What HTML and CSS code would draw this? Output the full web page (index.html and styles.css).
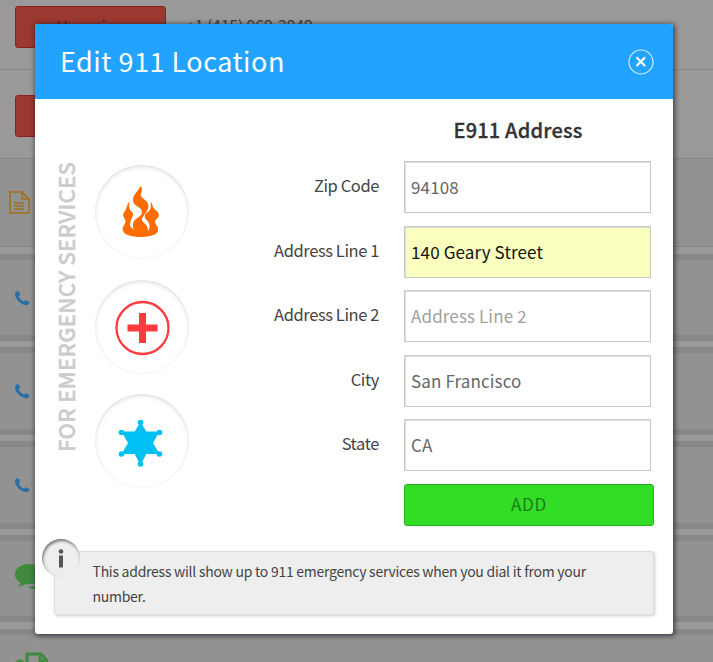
FILE: index.html
```html
<!DOCTYPE html>
<html lang="en">
<head>
<meta charset="utf-8">
<title>Edit 911 Location</title>
<link rel="stylesheet" href="styles.css">
</head>
<body>
<div class="page">
  <div class="number-row first"><span class="danger">Unassign</span><span class="phone">+1 (415) 969-2949</span></div>
  <div class="number-row"><span class="danger"></span></div>
  <div class="note-row">
    <svg class="doc" viewBox="0 0 21 24" width="21" height="24"><path d="M1 1h12l7 7v14H1zM13 1v7h7M5 12h10M5 15h10M5 18h10" fill="none" stroke="#a1701f" stroke-width="1.6"/></svg>
  </div>
  <div class="card"><svg class="call" viewBox="0 0 15 15" width="15" height="15"><path d="M1.200 0.500L4.200 0.400L5 4.200L3.700 5.400C4.700 7.700 6.500 9.600 9.100 10.600L10.600 9.200L14.500 10.900C14.300 12.600 13.400 14.200 11.500 14.200C6 14.200 0.300 8.600 0.100 3.600C0.050 2.200 0.500 1 1.200 0.500Z"/></svg></div>
  <div class="card tall"><svg class="call" viewBox="0 0 15 15" width="15" height="15"><path d="M1.200 0.500L4.200 0.400L5 4.200L3.700 5.400C4.700 7.700 6.500 9.600 9.100 10.600L10.600 9.200L14.500 10.900C14.300 12.600 13.400 14.200 11.500 14.200C6 14.200 0.300 8.600 0.100 3.600C0.050 2.200 0.500 1 1.200 0.500Z"/></svg></div>
  <div class="card tall"><svg class="call" viewBox="0 0 15 15" width="15" height="15"><path d="M1.200 0.500L4.200 0.400L5 4.200L3.700 5.400C4.700 7.700 6.500 9.600 9.100 10.600L10.600 9.200L14.500 10.900C14.300 12.600 13.400 14.200 11.500 14.200C6 14.200 0.300 8.600 0.100 3.600C0.050 2.200 0.500 1 1.200 0.500Z"/></svg></div>
  <div class="card chat-card"><svg viewBox="0 0 36 26" width="36" height="26" fill="#3f8a3f"><path d="M14 0C6 0 0 4.500 0 10.500c0 3.500 2 6.500 5.500 8.500-.5 1.500-1.300 2.500-2.500 3.500 3 0 5.500-1 7.500-2.500 1 .2 2.200.3 3.500.3 8 0 14-4.300 14-9.800S22 0 14 0z"/><path d="M13 22.500c8 0 14-2 17-6l3 7c-5 2-9 2-11 1.200-3.500 1-6.500 0-9-2.200z"/></svg></div>
  <div class="card file-card"><svg viewBox="0 0 34 30" width="34" height="30"><circle cx="5" cy="12.500" r="5" fill="#3f8a3f"/><path d="M12 14V2h14l5.500 6v14M25 2v7h7" fill="none" stroke="#3f8a3f" stroke-width="3"/></svg></div>
</div>

<div class="modal">
  <div class="modal-head">
    <h1>Edit 911 Location</h1>
    <svg class="close" viewBox="0 0 26 26" width="26" height="26"><circle cx="13" cy="13" r="12" fill="none" stroke="#d6edff" stroke-width="1.100"/><path d="M8.500 8.300l8.600 8.600M17.100 8.300l-8.600 8.600" stroke="#fff" stroke-width="2.100"/></svg>
  </div>
  <div class="modal-body">
    <div class="services">FOR EMERGENCY SERVICES</div>
    <div class="badges">
      <div class="badge"><svg viewBox="0 0 94 94" width="94" height="94" fill="#ff6d00"><path d="M45.500 21C43 27 37.500 29.500 38 36C38.400 41.500 48 42 47 48C46.300 52 40 53 38.500 57C37.300 60 38 62 38.500 64.500C35.500 62 34.500 60.500 35.500 57C36 53.500 39.500 50 37.500 47.500C35 45 33.500 44 34.500 36.500C31 41 32 44 29.500 46.500C27 49.500 28.500 52 30 54.500C31 56.500 30.500 58 28.500 61C25 68 33 72 45.500 72C59 72 66 68 62 61C60 58 59.500 56 61.500 54C65 51 64.500 48 60.500 45C57 42 58 39 55.500 36.500C57 44 54.500 46 51 48.500C48.500 51 50 53.500 52.500 56C55 59 55.500 61.500 53 66C53 61 51 59.500 48.500 57.500C46 55 46.500 53 50 49C53 45 54.500 41.500 52.500 37.500C50 34 43.500 32 46.500 27C47.700 24.800 47 22.500 45.500 21Z"/></svg></div>
      <div class="badge"><svg viewBox="0 0 94 94" width="94" height="94"><circle cx="47.500" cy="48" r="26" fill="none" stroke="#ff3b3f" stroke-width="2.300"/><path d="M47.500 33v30M32.500 48h30" stroke="#ff3b3f" stroke-width="7"/></svg></div>
      <div class="badge"><svg viewBox="0 0 94 94" width="94" height="94" fill="#00bff3"><path d="M45.500 28L51.300 37.500H64.500L58 49L64.500 60H51.300L45.500 71L39.700 60H26.500L33 49L26.500 37.500H39.700Z"/><circle cx="45.500" cy="28.500" r="2.800"/><circle cx="26.500" cy="38.500" r="2.800"/><circle cx="64.500" cy="38.500" r="2.800"/><circle cx="26.500" cy="60" r="2.800"/><circle cx="64.500" cy="60" r="2.800"/><circle cx="45.500" cy="70" r="2.800"/></svg></div>
    </div>
    <div class="form">
      <h2>E911 Address</h2>
      <label class="field"><span>Zip Code</span><b class="input">94108</b></label>
      <label class="field"><span>Address Line 1</span><b class="input filled">140 Geary Street</b></label>
      <label class="field"><span>Address Line 2</span><b class="input placeholder">Address Line 2</b></label>
      <label class="field"><span>City</span><b class="input">San Francisco</b></label>
      <label class="field"><span>State</span><b class="input">CA</b></label>
      <div class="add">ADD</div>
    </div>
  </div>
  <div class="info">
    <span class="info-icon"><svg viewBox="0 0 6 19" width="6" height="19" fill="#555"><circle cx="3" cy="2.500" r="2.300"/><rect x="1" y="6.500" width="4" height="12"/></svg></span>
    <p>This address will show up to 911 emergency services when you dial it from your number.</p>
  </div>
</div>
</body>
</html>
```
FILE: styles.css
```css
* { box-sizing: border-box; margin: 0; padding: 0; }
html, body { width: 713px; height: 662px; overflow: hidden; }
body { font-family: "Noto Sans CJK SC", "Noto Sans", sans-serif; color: #444; background: #999; }

.page { height: 662px; overflow: hidden; }
.number-row { height: 89px; padding: 25px 0 0 15px; border-bottom: 1px solid #868686; display: flex; align-items: flex-start; }
.number-row.first { height: 70px; padding-top: 6px; }
.danger { width: 151px; height: 42px; background: #9b382f; border: 1px solid #8d2119; border-radius: 3px; text-align: center; font-size: 16px; line-height: 38px; color: #4f1d18; }
.phone { margin-left: 20px; font-size: 16px; line-height: 38px; letter-spacing: -.2px; color: #3c3c3c; }
.note-row { height: 88px; background: #929292; border-bottom: 1px solid #868686; padding: 32px 0 0 9px; margin-bottom: 7px; }
.card { height: 87px; border: solid #888; border-width: 6px 0; background: #929292; margin-bottom: 6px; padding: 31px 0 0 15px; }
.card.tall { height: 88px; }
.call { fill: #2a6ea6; }
.chat-card { padding-top: 23px; margin-bottom: 7px; }
.file-card { padding-top: 17px; padding-left: 15px; }
.page svg { display: block; }

.modal { position: absolute; left: 35px; top: 24px; width: 638px; height: 610px; background: #fff; border-radius: 3px; box-shadow: 1px 1px 5px 1px rgba(20, 20, 30, .65); }
.modal-head { height: 75px; background: #22a3ff; border-radius: 3px 3px 0 0; display: flex; align-items: center; justify-content: space-between; padding: 0 19px 0 25px; }
h1 { font-weight: 400; font-size: 27px; line-height: 40px; margin-bottom: 2px; color: #fff; letter-spacing: .5px; }
.close { display: block; margin-top: 1px; }
.modal-body { height: 452px; display: flex; }
.services { width: 26px; height: 291px; margin: 62px 0 0 17px; writing-mode: vertical-rl; transform: rotate(180deg); font-size: 22px; line-height: 26px; font-weight: 500; -webkit-text-stroke: .4px #ccc; letter-spacing: .24px; color: #ccc; white-space: nowrap; }
.badges { display: flex; flex-direction: column; gap: 21px; margin: 66px 0 0 17px; }
.badge { width: 94px; height: 94px; border-radius: 50%; box-shadow: inset 0 2px 4px rgba(0, 0, 0, .12), inset 0 0 2px rgba(0, 0, 0, .06); }
.badge:last-child { margin-top: -1px; }
.badge svg { display: block; }
.form { flex: 1; padding: 15px 19px 0 0; display: flex; flex-direction: column; }
h2 { width: 250px; height: 32px; margin-bottom: 15px; align-self: flex-end; text-align: center; font-size: 20px; line-height: 32px; font-weight: 500; -webkit-text-stroke: .3px #333; letter-spacing: .17px; color: #333; }
.form h2 { padding-right: 22px; }
.field { display: flex; justify-content: flex-end; height: 52px; margin-bottom: 12.5px; padding-right: 3px; }
.field span { margin-right: 25px; font-size: 16.500px; line-height: 49px; letter-spacing: -.4px; color: #444; }
.input { width: 247px; height: 52px; border: 1px solid #c8c8c8; box-shadow: inset 1px 1px 1px #ddd; padding-left: 6px; font-weight: 400; font-size: 17px; line-height: 49px; letter-spacing: .13px; color: #666; }
.input.filled { background: #faffbd; color: #111; }
.input.placeholder { color: #a0a0a0; }
.add { width: 250px; height: 42px; align-self: flex-end; background: #33dd26; border: 1px solid #28ad20; border-radius: 3px; text-align: center; font-size: 17px; line-height: 38px; letter-spacing: .7px; color: #1d7c17; }
.info { position: relative; margin-left: 19px; width: 600px; height: 64px; background: #eee; border: 1px solid #ddd; border-radius: 3px; box-shadow: 1px 1px 3px rgba(0, 0, 0, .2); padding: 6.5px 50px 0 37.500px; }
.info p { font-size: 14px; line-height: 25px; letter-spacing: -.26px; color: #444; }
.info-icon { position: absolute; left: -13px; top: -13px; width: 38px; height: 38px; border-radius: 50%; background: #eee; box-shadow: inset 1px 2px 3px rgba(0, 0, 0, .5); display: flex; align-items: center; justify-content: center; }
```
